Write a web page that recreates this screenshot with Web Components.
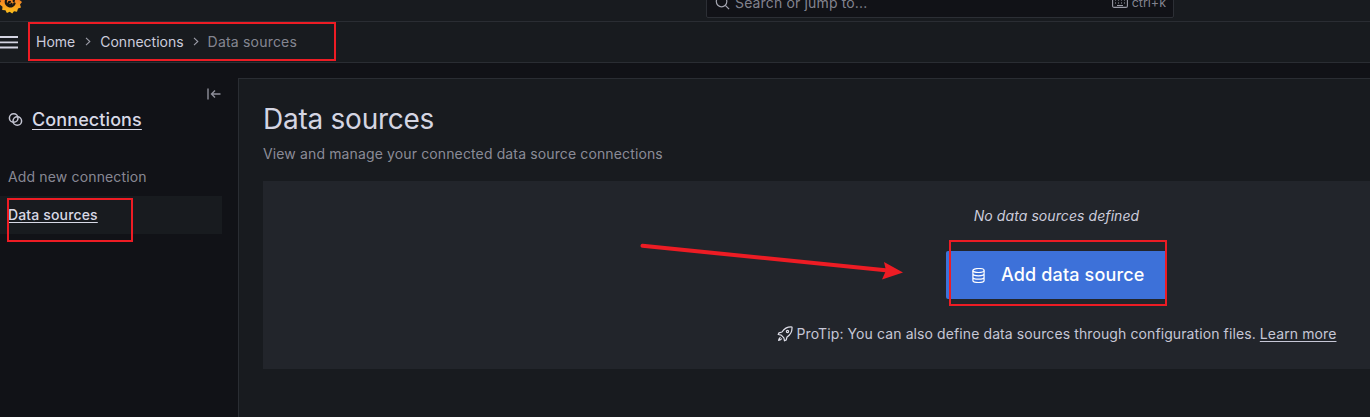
<!DOCTYPE html>
<html lang="en"><head><meta charset="utf-8"><title>Data sources</title>
<style>
html,body{margin:0;height:100%;background:#111217;overflow:hidden}
body{font:14px/21px Inter,"Noto Sans",sans-serif;letter-spacing:.15px;color:#ccccdc;position:relative;width:1370px;height:417px}
</style></head><body>
<gf-app></gf-app>
<script>
function def(name, html){
  customElements.define(name, class extends HTMLElement{
    constructor(){super();this.attachShadow({mode:'open'}).innerHTML=html;}
  });
}
def('gf-search',`<style>
:host{display:flex;align-items:center;box-sizing:border-box;width:468px;height:32px;flex:none;background:#111217;border:1px solid #2c2f35;border-radius:2px;padding:0 7px 0 8px;color:rgba(204,204,220,.62)}
svg{flex:none}.t{margin-left:5px;flex:1}.k{margin-left:4px;font-size:12.5px;letter-spacing:0}
</style>
<svg width="15" height="15" viewBox="0 0 16 16" fill="none" stroke="#a3a4af" stroke-width="1.3"><circle cx="7" cy="7" r="5.6"/><path d="M11 11l4 4"/></svg>
<span class="t">Search or jump to...</span>
<svg width="16" height="14" viewBox="0 0 16 14" fill="none" stroke="#9a9ba6" stroke-width="1.1"><rect x=".6" y="1.6" width="14.8" height="10.8" rx="1.5"/><path d="M3 5h1M6 5h1M9 5h1M12 5h1M3 8h1M6 8h1M9 8h1M12 8h1M5 10.500h6"/></svg>
<span class="k">ctrl+k</span>`);

def('gf-logo',`<style>:host{display:block;width:24px;height:24px;flex:none}</style>
<svg width="24" height="24" viewBox="0 0 24 24"><defs><linearGradient id="g" x1="0" y1="1" x2="0" y2="0"><stop offset="0" stop-color="#fcc11c"/><stop offset="1" stop-color="#f05a28"/></linearGradient></defs>
<path fill="url(#g)" d="M12 1l2.500 3 3-1.500 1 3.500 3.500.5-.5 3.500 2.500 2-2 2.500 1 3-3 1-1 3.200-3-.5-1.800 2.300-2.500-1.800-2.800 1.300-1.500-2.800-3.200-.2.300-3.200L1 14l1.800-2.500L1.500 8.500 4.500 7.500 5 4l3.300.5z"/>
<path fill="none" stroke="#1a1613" stroke-width="2.200" stroke-linecap="round" d="M16.500 13.500a4.500 4.500 0 1 1-3.500-6c2.200.3 3.200 2 2.700 3.700M12 11.800a1.600 1.600 0 1 0 1.500 2"/></svg>`);

def('gf-topbar',`<style>
:host{display:flex;align-items:flex-end;box-sizing:border-box;height:22px;background:#181b1f;border-bottom:1px solid #2a2d33;overflow:hidden;padding-bottom:3px}
.l{width:706px;flex:none;align-self:flex-end;margin-bottom:4px}
.l gf-logo{margin-left:-2px}
</style><div class="l"><gf-logo></gf-logo></div><gf-search></gf-search>`);

def('gf-crumbs',`<style>
:host{display:flex;align-items:center;box-sizing:border-box;height:41px;background:#181b1f;border-bottom:1px solid #2a2d33;padding-bottom:1px;color:#ccccdc;letter-spacing:0}
.h{width:18px;height:14px;margin-right:18px;flex:none;display:block}
.c{width:25px;flex:none;display:flex;justify-content:center}
.d{color:rgba(204,204,220,.62);letter-spacing:.2px}
</style>
<svg class="h" viewBox="0 0 18 14"><path d="M0 2h18M0 7.300h18M0 12.500h18" stroke="#d4d4e2" stroke-width="1.800"/></svg>
<span>Home</span><span class="c"><svg width="6" height="9" viewBox="0 0 6 9" fill="none" stroke="#9c9da8" stroke-width="1.100"><path d="M1 .8l3.800 3.700L1 8.200"/></svg></span>
<span>Connections</span><span class="c" style="width:24px"><svg width="6" height="9" viewBox="0 0 6 9" fill="none" stroke="#9c9da8" stroke-width="1.100"><path d="M1 .8l3.800 3.700L1 8.200"/></svg></span>
<span class="d">Data sources</span>`);

def('gf-nav-item',`<style>
:host{display:flex;align-items:center;height:38px;padding-left:8px;color:rgba(204,204,220,.65)}
:host([active]){background:#181b1f;color:#d8d9e6;font-weight:500}
span{margin-top:-1px}
:host([active]) span{text-decoration:underline;text-underline-offset:2px}
</style><span><slot></slot></span>`);

def('gf-sidebar',`<style>
:host{display:block;box-sizing:border-box;width:238px;flex:none;padding:0 16px 0 0}
.col{display:flex;justify-content:flex-end;height:22px;margin-top:20px;align-items:center;padding-right:1px}
.title{display:flex;align-items:center;height:24px;margin-top:2px;padding-left:8px;color:#d8d9e6}
.title svg{margin-right:9px;flex:none}
.title a{color:inherit;text-decoration:underline;text-underline-offset:3px;font-size:18px;font-weight:500;letter-spacing:.1px}
nav{margin-top:27px}
</style>
<div class="col"><svg width="14" height="12" viewBox="0 0 14 12" fill="none" stroke="#8e8f9a" stroke-width="1.400"><path d="M1 .5v11M13.500 6H4.500M8 2.500L4.500 6 8 9.500"/></svg></div>
<div class="title"><svg width="15" height="15" viewBox="0 0 15 15" fill="none" stroke="#c4c5d2" stroke-width="1.500"><circle cx="5.700" cy="6" r="4.300"/><circle cx="9.300" cy="9" r="4.300"/></svg><a>Connections</a></div>
<nav><gf-nav-item>Add new connection</gf-nav-item><gf-nav-item active>Data sources</gf-nav-item></nav>`);

def('gf-button',`<style>
:host{display:inline-flex;align-items:center;box-sizing:border-box;height:48px;width:221px;background:#3d71d9;border-radius:2px;padding-left:26px;color:#fff;font-size:18px;font-weight:500}
svg{margin-right:16px;flex:none}
span{margin-top:-1px}
</style><svg width="13" height="15" viewBox="0 0 13 15" fill="none" stroke="#fff" stroke-width="1.200"><ellipse cx="6.500" cy="2.500" rx="5.600" ry="2"/><path d="M.9 2.500v10c0 1.100 2.500 2 5.600 2s5.600-.9 5.600-2v-10M.9 5.800c0 1.100 2.500 2 5.600 2s5.600-.9 5.600-2M.9 9.200c0 1.100 2.500 2 5.600 2s5.600-.9 5.600-2"/></svg><span><slot></slot></span>`);

def('gf-empty-card',`<style>
:host{display:flex;flex-direction:column;align-items:center;box-sizing:border-box;width:1587px;height:188px;padding-top:24px;background:#22252b;color:#ccccdc}
.n{font-style:italic;font-size:14px;height:21px;letter-spacing:.08px}
gf-button{margin-top:25px}
.p{display:flex;align-items:center;margin-top:24px;height:21px;white-space:pre;color:#c6c7d6;letter-spacing:.1px}
.p svg{margin-right:4px;flex:none}
a{color:inherit;text-decoration:underline;text-underline-offset:2px}
</style>
<div class="n">No data sources defined</div>
<gf-button>Add data source</gf-button>
<div class="p"><svg width="16" height="16" viewBox="0 0 16 16" fill="none" stroke="#e0e0ea" stroke-width="1.200" stroke-linejoin="round"><path d="M15 1c-4.300-.3-7.500 1.200-10 5L2 6.800 1.200 8.500l3 .6 2.700 2.700.6 3 1.700-.8.800-3c3.800-2.500 5.300-5.700 5-10z"/><path d="M3.500 11.200C2.300 12 1.800 13.200 1.600 14.400c1.200-.2 2.400-.7 3.200-1.900"/><circle cx="10.500" cy="5.500" r="1.100"/></svg><span>ProTip: You can also define data sources through configuration files. <a>Learn more</a></span></div>`);

def('gf-main',`<style>
:host{display:block;flex:none;box-sizing:border-box;width:1632px;margin-top:15px;background:#181b1f;border:1px solid #2a2d33;border-width:1px 0 0 1px;padding:22px 24px 0}
h1{margin:0;font-size:28px;font-weight:400;line-height:36px;letter-spacing:-.25px;color:#d4d5e2}
p{margin:6px 0 17px;line-height:21px;letter-spacing:.13px;color:rgba(204,204,220,.65)}
</style><h1>Data sources</h1><p>View and manage your connected data source connections</p><gf-empty-card></gf-empty-card>`);

def('gf-annotations',`<style>:host{position:absolute;inset:0;display:block;pointer-events:none}svg{display:block}</style>
<svg width="1370" height="417" viewBox="0 0 1370 417" fill="none">
<g stroke="#ed1c24" stroke-width="2"><rect x="29" y="23" width="306" height="37"/><rect x="8" y="199" width="124" height="42"/><rect x="950" y="241" width="216" height="64"/></g>
<path d="M642.500 245.800L888 270.500" stroke="#ed1c24" stroke-width="4" stroke-linecap="round"/>
<path d="M903 272.500L884 262 886 270.500 882 279.500z" fill="#ed1c24"/></svg>`);

def('gf-app',`<style>
:host{display:flex;flex-direction:column;width:1370px;height:417px;overflow:hidden;background:#111217}
.b{display:flex;flex:1;min-height:0}
</style><gf-topbar></gf-topbar><gf-crumbs></gf-crumbs><div class="b"><gf-sidebar></gf-sidebar><gf-main></gf-main></div><gf-annotations></gf-annotations>`);
</script></body></html>
